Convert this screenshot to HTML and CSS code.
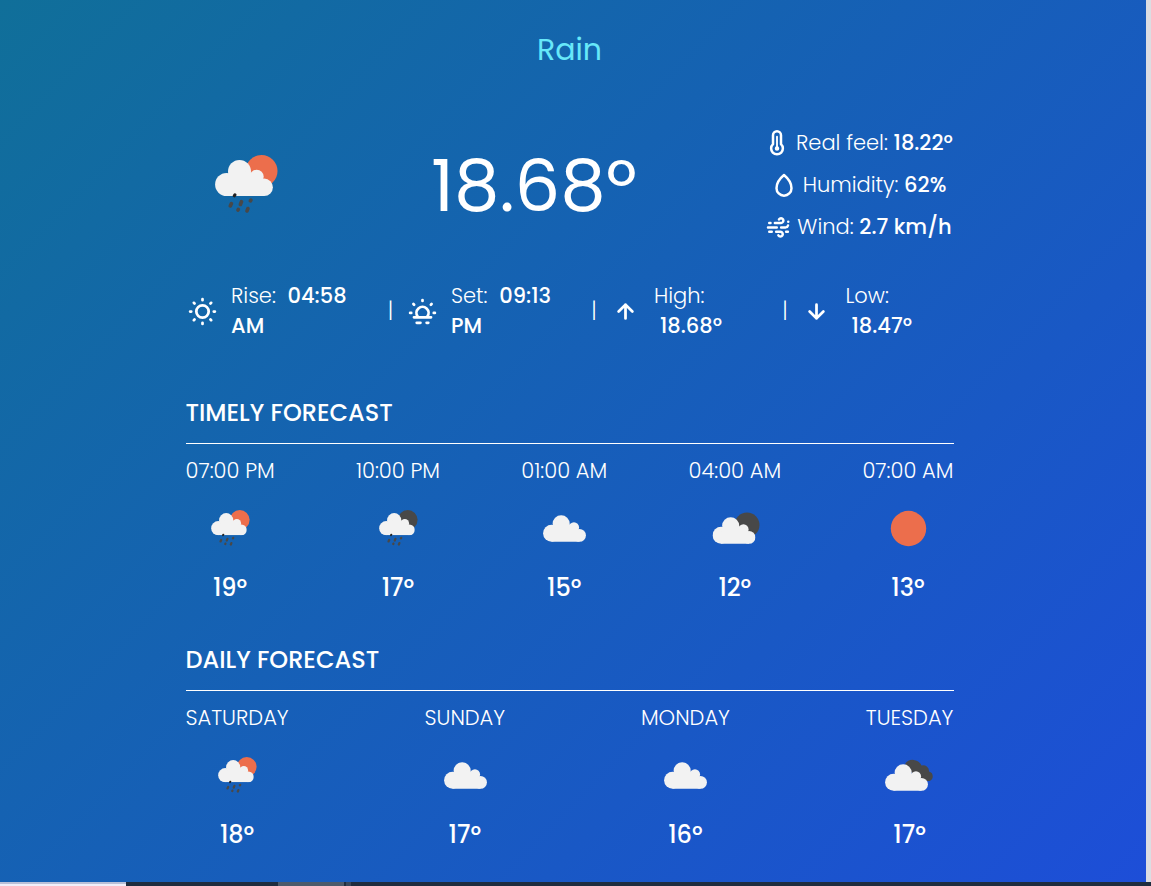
FILE: index.html
```html
<!DOCTYPE html>
<html lang="en">
<head>
<meta charset="utf-8">
<title>Weather</title>
<link rel="stylesheet" href="styles.css">
</head>
<body>
<svg class="defs" aria-hidden="true">
  <defs>
    <symbol id="cloud" viewBox="0 0 58 36">
      <g fill="#f2f2f2"><circle cx="11.600" cy="24.500" r="11.500"/><circle cx="24.500" cy="11.500" r="11.500"/><circle cx="41.700" cy="16.700" r="7"/><circle cx="49.200" cy="27.300" r="8.700"/><path d="M11.600 36V20L24 10l17.700 4L49.200 24v12z"/></g>
    </symbol>
    <symbol id="drops" viewBox="0 0 30 24">
      <g stroke="#484848" stroke-linecap="round" stroke-width="4">
        <path d="M4 11.500l-1.200 2.600M15 9.500l-1.200 3M25.300 7.800l-.6.8M11.500 18l-.3.6M22 17l-1 2.600"/>
        <path stroke="#222" stroke-width="3.400" d="M7.800 2l-.6 1"/>
      </g>
    </symbol>
    <symbol id="rain-day" viewBox="0 0 63 60">
      <circle cx="46.500" cy="16" r="16" fill="#ec6e4c"/>
      <use href="#cloud" x="0" y="5" width="58" height="36"/><use href="#drops" x="12" y="38" width="29" height="22"/>
    </symbol>
    <symbol id="rain-night" viewBox="0 0 63 60">
      <circle cx="46.500" cy="16" r="16" fill="#484848"/>
      <use href="#cloud" x="0" y="5" width="58" height="36"/><use href="#drops" x="12" y="38" width="29" height="22"/>
    </symbol>
  </defs>
</svg>
<div class="page">
  <main class="weather">
    <p class="condition">Rain</p>
    <section class="now">
      <svg class="now-icon"><use href="#rain-day"/></svg>
      <p class="now-temp">18.68º</p>
      <ul class="details">
        <li><svg class="line" viewBox="0 0 24 24"><path d="M8.800 12.900V5.800a3.200 3.200 0 0 1 6.400 0v7.100a4.700 4.700 0 1 1-6.400 0Z"/><path class="thin" d="M12 7v9"/><circle cx="12" cy="16.300" r=".8"/></svg><span>Real feel: <b>18.22º</b></span></li>
        <li><svg class="line" viewBox="0 0 24 24"><path d="M12 4C9 6.500 6 10 6 14.500a6 6 0 0 0 12 0C18 10 15 6.500 12 4Z"/></svg><span>Humidity: <b>62%</b></span></li>
        <li><svg class="line wind" viewBox="0 0 24 24"><path d="M5 8.800h1M9.500 8.800h5a1.900 1.900 0 1 0-1.700-2.900M4 12.300h7M14.500 12.300h3.700a2 2 0 0 0 1.800-1.500M20.200 7.800h0M5 15.800h2M10.500 15.800h3.500a1.900 1.900 0 1 1-1.700 2.900M18.500 15.800h1.400"/></svg><span>Wind: <b>2.7 km/h</b></span></li>
      </ul>
    </section>
    <section class="stats">
      <div class="stat rise"><svg class="line" viewBox="0 0 24 24"><circle cx="12" cy="12" r="4.500"/><path d="M12 3v.8M12 20.200v.8M3 12h.8M20.200 12h.8M5.700 5.700l.5.5M17.800 17.800l.5.5M5.700 18.300l.5-.5M17.800 6.200l.5-.5"/></svg><p>Rise: <b>04:58<br></b><b class="meridiem">AM</b></p></div>
      <i>|</i>
      <div class="stat set"><svg class="line" viewBox="0 0 24 24"><path d="M5.800 16.200h12.400M8.500 15.700a4.400 4.400 0 1 1 7 0M7.800 20.200h2.700M15 20.200h1.200M3 13h.8M20.200 13h.8M12 3.700v.6M5.400 6.600l.5.5M18.600 6.600l-.5.5"/></svg><p>Set: <b>09:13<br></b><b class="meridiem">PM</b></p></div>
      <i>|</i>
      <div class="stat high"><svg class="line" viewBox="0 0 24 24"><path d="M12 17V7M7 12l5-5 5 5"/></svg><p>High:<br><b>18.68º</b></p></div>
      <i>|</i>
      <div class="stat low"><svg class="line" viewBox="0 0 24 24"><path d="M12 7v10M7 12l5 5 5-5"/></svg><p>Low:<br><b>18.47º</b></p></div>
    </section>
    <section class="forecast timely">
      <h2>TIMELY FORECAST</h2>
      <div class="cards">
        <div class="card"><span>07:00 PM</span><svg viewBox="0 0 62.500 62.500"><use href="#rain-day" x="12" y="13" width="39" height="37"/></svg><b>19º</b></div>
        <div class="card"><span>10:00 PM</span><svg viewBox="0 0 62.500 62.500"><use href="#rain-night" x="12" y="13" width="39" height="37"/></svg><b>17º</b></div>
        <div class="card"><span>01:00 AM</span><svg viewBox="0 0 62.500 62.500"><use href="#cloud" x="10" y="18" width="43" height="27"/></svg><b>15º</b></div>
        <div class="card"><span>04:00 AM</span><svg viewBox="0 0 62.500 62.500"><circle cx="43" cy="28" r="12.500" fill="#484848"/><use href="#cloud" x="8.500" y="20" width="43" height="27"/></svg><b>12º</b></div>
        <div class="card"><span>07:00 AM</span><svg viewBox="0 0 62.500 62.500"><circle cx="31.500" cy="31.500" r="17.700" fill="#ec6e4c"/></svg><b>13º</b></div>
      </div>
    </section>
    <section class="forecast daily">
      <h2>DAILY FORECAST</h2>
      <div class="cards">
        <div class="card"><span>SATURDAY</span><svg viewBox="0 0 62.500 62.500"><use href="#rain-day" x="12" y="13" width="39" height="37"/></svg><b>18º</b></div>
        <div class="card"><span>SUNDAY</span><svg viewBox="0 0 62.500 62.500"><use href="#cloud" x="10" y="18" width="43" height="27"/></svg><b>17º</b></div>
        <div class="card"><span>MONDAY</span><svg viewBox="0 0 62.500 62.500"><use href="#cloud" x="10" y="18" width="43" height="27"/></svg><b>16º</b></div>
        <div class="card"><span>TUESDAY</span><svg viewBox="0 0 62.500 62.500"><path fill="#484848" d="M27 20a9.500 9.500 0 0 1 16.500 1.500a5.800 5.800 0 0 1 7.500 6a5 5 0 0 1 .5 9.500H40z"/><use href="#cloud" x="7" y="20" width="43" height="27"/></svg><b>17º</b></div>
      </div>
    </section>
  </main>
  <aside class="gutter"></aside>
</div>
<footer class="taskbar"><span class="search"></span><span class="task"></span><span class="edge"></span></footer>
</body>
</html>
```

FILE: styles.css
```css
* { box-sizing: border-box; margin: 0; padding: 0; }
body { width: 1151px; height: 886px; overflow: hidden; color: #fff; font-family: Poppins, Inter, sans-serif; font-size: 21px; font-weight: 300; line-height: 30px; }
b { font-weight: 500; }
ul { list-style: none; }
.defs { display: block; width: 0; height: 0; }
.page { display: flex; height: 882px; }
.weather { width: 1146px; padding: 27px 192.500px 0 185.500px; background: linear-gradient(to bottom right, #0e7490, #1d4ed8) left bottom / 100% 1190px no-repeat; }
.gutter { flex: 1; background: #dcdde2; }
.condition { height: 45px; text-align: center; font-size: 30px; font-weight: 400; line-height: 45px; color: #67e8f9; }
.line { flex: none; fill: none; stroke: currentColor; stroke-width: 2; stroke-linecap: round; stroke-linejoin: round; }
.line .thin { stroke-width: 1.500; }
.now { display: flex; justify-content: space-between; align-items: center; height: 114px; margin-top: 56px; padding-left: 29px; }
.now-icon { width: 63px; height: 60px; }
.now-temp { margin-left: 29px; font-size: 72px; font-weight: 400; line-height: 75px; }
.details { display: flex; flex-direction: column; gap: 12px; width: 192px; }
.details li { display: flex; justify-content: center; align-items: center; gap: 4px; height: 30px; white-space: nowrap; }
.details svg { width: 30px; height: 30px; }
.stats { display: flex; align-items: center; height: 60px; margin-top: 39px; }
.stats i { display: flex; justify-content: center; width: 2px; font-style: normal; }
.stat { display: flex; align-items: center; gap: 12.500px; white-space: nowrap; }
.stat svg { width: 33px; height: 33px; }
.stat b { margin-left: 6px; }
.stat .meridiem { margin-left: 0; }
.rise { width: 204px; }
.set { width: 201.500px; padding-left: 14px; }
.high { width: 189px; padding-left: 13.500px; }
.low { padding-left: 14px; }
.timely { margin-top: 56px; }
.daily { margin-top: 41px; }
.forecast h2 { height: 47px; font-size: 24px; font-weight: 500; line-height: 31px; border-bottom: 1px solid #fff; }
.cards { display: flex; justify-content: space-between; padding-top: 12px; }
.card { display: flex; flex-direction: column; align-items: center; }
.card svg { width: 62.500px; height: 62.500px; margin: 11px 0 13.500px; }
.card b { height: 30px; font-size: 24px; line-height: 30px; }
.taskbar { display: flex; height: 4px; background: #1f2c3e; }
.search { width: 126px; background: #f1effa; border-top: 2px solid #b9c0d8; }
.task { width: 66px; margin-left: 152px; background: #4c5a6b; }
.edge { width: 5px; margin-left: 2px; background: #38465a; }
```
